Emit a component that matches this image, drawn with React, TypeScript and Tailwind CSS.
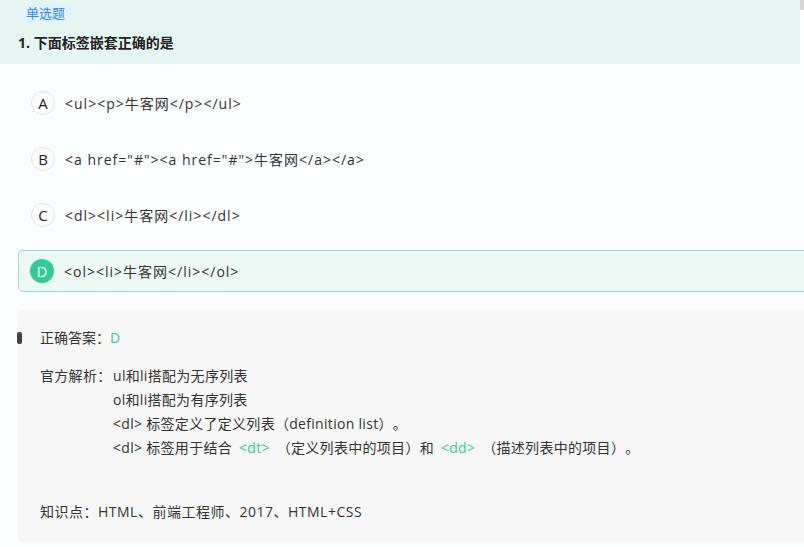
const font = { fontFamily: '"Open Sans", "Noto Sans CJK SC", sans-serif' }

const options = [
  { key: 'A', text: '<ul><p>牛客网</p></ul>' },
  { key: 'B', text: '<a href="#"><a href="#">牛客网</a></a>' },
  { key: 'C', text: '<dl><li>牛客网</li></dl>' },
  { key: 'D', text: '<ol><li>牛客网</li></ol>', correct: true },
]

export default function App() {
  return (
    <div
      lang="zh-CN"
      className="relative w-[804px] h-[547px] overflow-hidden bg-[#fcfdff] text-[#333] text-[14px] [text-spacing-trim:space-all]"
      style={font}
    >
      {/* Header */}
      <div className="w-[800px] h-[64px] bg-[#e5f5f1] px-[18px]">
        <div className="pt-[2px]">
          <span className="inline-block bg-[#e3f2fb] text-[#2a8cf0] text-[13px] leading-[19px] px-[8px]">
            单选题
          </span>
        </div>
        <div className="mt-[10px] font-bold text-[14px] leading-[20px] text-[#222]">
          1. 下面标签嵌套正确的是
        </div>
      </div>
      {/* scrollbar thumb */}
      <div className="absolute right-0 top-0 w-[4px] h-[10px] bg-[#d6d6d6]" />

      {/* Options */}
      <div className="w-[830px] pl-[18px] pt-[18px] flex flex-col gap-[14px]">
        {options.map((o) => (
          <div
            key={o.key}
            className={
              o.correct
                ? 'h-[42px] flex items-center pl-[11px] rounded-[5px] border border-[#8fe0c4] bg-[#ecf9f5]'
                : 'h-[42px] flex items-center pl-[12px] border border-transparent'
            }
          >
            <span
              className={
                o.correct
                  ? 'w-[24px] h-[24px] rounded-full bg-[#32ca99] text-white flex items-center justify-center text-[15px]'
                  : 'w-[24px] h-[24px] rounded-full border border-[#e2e2e2] bg-white text-[#222] flex items-center justify-center text-[15px]'
              }
            >
              {o.key}
            </span>
            <span className="ml-[10px] text-[#333] whitespace-pre tracking-[1px]">{o.text}</span>
          </div>
        ))}
      </div>

      {/* Analysis */}
      <div className="relative mt-[18px] ml-[18px] w-[810px] h-[233px] rounded-[6px] bg-[#f7f7f7] pl-[22px] pt-[18px]">
        <div className="absolute left-[-1px] top-[22px] w-[5px] h-[12px] rounded-[2px] bg-[#444]" />
        <div className="flex leading-[20px]">
          <span>正确答案：</span>
          <span className="text-[#32ca99]">D</span>
        </div>
        <div className="flex mt-[16px] leading-[24px] tracking-[0.3px]">
          <span className="shrink-0 w-[73px]">官方解析：</span>
          <div>
            <div>ul和li搭配为无序列表</div>
            <div>ol和li搭配为有序列表</div>
            <div>&lt;dl&gt; 标签定义了定义列表（definition list）。</div>
            <div>
              &lt;dl&gt; 标签用于结合 <span className="text-[#32ca99] px-[3px]">&lt;dt&gt;</span> （定义列表中的项目）和{' '}
              <span className="text-[#32ca99] px-[3px]">&lt;dd&gt;</span> （描述列表中的项目）。
            </div>
          </div>
        </div>
        <div className="mt-[40px] leading-[24px] tracking-[0.5px]">知识点：HTML、前端工程师、2017、HTML+CSS</div>
      </div>
    </div>
  )
}
